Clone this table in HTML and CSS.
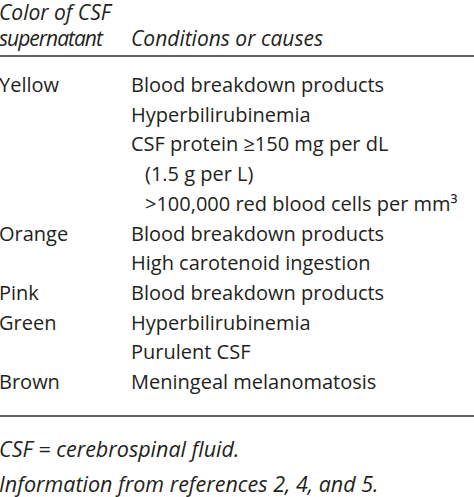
FILE: index.html
```html
<!DOCTYPE html>
<html lang="en">
<head>
<meta charset="utf-8">
<title>Color of CSF supernatant</title>
<link rel="stylesheet" href="styles.css">
</head>
<body>
<div class="table">
  <div class="head">
    <div class="c1">Color of CSF<br><span class="tight">supernatant</span></div>
    <div class="c2">Conditions or causes</div>
  </div>
  <div class="body">
    <div class="group">
      <div class="c1">Yellow</div>
      <div class="c2">
        <div>Blood breakdown products</div>
        <div>Hyperbilirubinemia</div>
        <div>CSF protein ≥150 mg per dL</div>
        <div class="ind">(1.5 g per L)</div>
        <div class="ind">&gt;100,000 red blood cells per mm³</div>
      </div>
    </div>
    <div class="group">
      <div class="c1">Orange</div>
      <div class="c2">
        <div>Blood breakdown products</div>
        <div>High carotenoid ingestion</div>
      </div>
    </div>
    <div class="group">
      <div class="c1">Pink</div>
      <div class="c2">
        <div>Blood breakdown products</div>
      </div>
    </div>
    <div class="group">
      <div class="c1">Green</div>
      <div class="c2">
        <div>Hyperbilirubinemia</div>
        <div>Purulent CSF</div>
      </div>
    </div>
    <div class="group">
      <div class="c1">Brown</div>
      <div class="c2">
        <div>Meningeal melanomatosis</div>
      </div>
    </div>
  </div>
  <div class="notes">
    <p class="note">CSF = cerebrospinal fluid.</p>
    <p class="note">Information from references 2, 4, and 5.</p>
  </div>
</div>
</body>
</html>
```
FILE: styles.css
```css
html, body {
  margin: 0;
  padding: 0;
  background: #ffffff;
  overflow: hidden;
}
body {
  font-family: "Open Sans", "Noto Sans", sans-serif;
  font-size: 20px;
  color: #231f20;
}
.table {
  margin-top: -1px;
  margin-left: -1px;
  white-space: nowrap;
}
.head {
  display: grid;
  grid-template-columns: 132px 1fr;
  align-items: end;
  font-style: italic;
  font-size: 21px;
  line-height: 26px;
  padding-bottom: 4px;
  border-bottom: 2px solid #5e5e5e;
}
.tight {
  letter-spacing: -1px;
}
.body {
  padding: 13px 0 18px;
  line-height: 29.7px;
  border-bottom: 2px solid #5e5e5e;
}
.group {
  display: grid;
  grid-template-columns: 132px 1fr;
}
.ind {
  padding-left: 14px;
}
.notes {
  font-style: italic;
  font-size: 21.5px;
  line-height: 35px;
  padding-top: 14px;
}
.note {
  margin: 0;
}
```
